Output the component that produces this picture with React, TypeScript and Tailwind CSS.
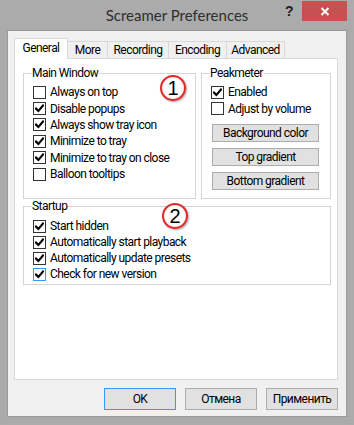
import React from 'react';

type CheckProps = { label: string; checked?: boolean; hot?: boolean; row?: string };

function Check({ label, checked, hot, row = 'h-[16px]' }: CheckProps) {
  return (
    <label className={`flex items-center ${row}`}>
      <span
        className={`flex h-[13px] w-[13px] shrink-0 items-center justify-center border bg-white ${
          hot ? 'border-[#3399ff]' : 'border-[#333333]'
        }`}
      >
        {checked && (
          <svg width="9" height="9" viewBox="0 0 9 9" fill="none">
            <path d="M1 4.6 L3.4 7 L8 1.6" stroke="#000" strokeWidth="2.2" strokeLinecap="square" />
          </svg>
        )}
      </span>
      <span className="ml-[4px] whitespace-nowrap">{label}</span>
    </label>
  );
}

function Badge({ n, pos }: { n: string; pos: string }) {
  return (
    <div
      className={`absolute flex h-[26px] w-[26px] items-center justify-center rounded-full border-2 border-[#dd2a2a] bg-[radial-gradient(circle,#ffffff_55%,#fde0e0_78%,#f4a0a0_100%)] text-[20px] leading-none tracking-normal text-black shadow-[1px_1px_2px_rgba(0,0,0,0.35)] font-['Liberation_Sans',sans-serif] ${pos}`}
    >
      {n}
    </div>
  );
}

function SmallButton({ label }: { label: string }) {
  return (
    <div className="ml-px flex h-[18px] w-[107px] items-center justify-center border border-[#adadad] bg-[#e1e1e1]">
      {label}
    </div>
  );
}

const tabs = [
  { label: 'General', w: 'w-[54px]', active: true },
  { label: 'More', w: 'w-[41px]' },
  { label: 'Recording', w: 'w-[62px]' },
  { label: 'Encoding', w: 'w-[59px]' },
  { label: 'Advanced', w: 'w-[59px]' },
];

export default function App() {
  return (
    <div className="flex h-[425px] w-[354px] flex-col bg-[#ababab] px-[7px] pb-[8px] text-[12px] leading-[14px] tracking-[-0.55px] text-black font-['Roboto','Liberation_Sans',sans-serif]">
      {/* title bar */}
      <div className="-mx-[7px] flex h-[30px] shrink-0 items-start">
        <div className="w-[78px]" />
        <div className="flex-1 text-center text-[15px] leading-[30px] tracking-normal text-[#2e2e2e] font-['Lato',sans-serif]">
          Screamer Preferences
        </div>
        <div className="flex w-[78px] pt-px">
          <div className="flex h-[20px] w-[26px] items-center justify-center text-[14px] font-bold text-[#222] font-['Liberation_Sans',sans-serif]">
            ?
          </div>
          <div className="flex h-[20px] w-[45px] items-center justify-center bg-[#c75050]">
            <svg width="10" height="9" viewBox="0 0 10 9">
              <path d="M1.5 1 L8.5 8 M8.5 1 L1.5 8" stroke="#fff" strokeWidth="2" />
            </svg>
          </div>
        </div>
      </div>

      {/* dialog body */}
      <div className="flex flex-1 flex-col border border-[#999999] bg-[#f0f0f0] pl-[6px] pr-[8px] pt-[7px] pb-[6px]">
        <div className="flex items-end">
          {tabs.map((t, i) =>
            t.active ? (
              <div
                key={t.label}
                className={`relative z-10 -mb-px flex h-[21px] items-center justify-center border border-b-0 border-[#d9d9d9] bg-white pb-[2px] ${t.w}`}
              >
                {t.label}
              </div>
            ) : (
              <div
                key={t.label}
                className={`flex h-[17px] items-center justify-center border border-b-0 border-[#d9d9d9] bg-[#f0f0f0] ${i > 0 ? '-ml-px' : ''} ${t.w}`}
              >
                {t.label}
              </div>
            )
          )}
        </div>

        <div className="h-[322px] border border-[#d9d9d9] bg-white pl-[8px] pr-[6px] pt-[7px]">
          <div className="flex gap-[5px]">
            <fieldset className="h-[133px] w-[173px] border border-[#d5d5d5]">
              <legend className="ml-[7px] px-[1px] leading-[14px]">Main Window</legend>
              <div className="relative pl-[9px] pt-[4px]">
                <Badge n="1" pos="left-[136px] -top-[5px]" />
                <Check label="Always on top" row="h-[16.4px]" />
                <Check label="Disable popups" checked row="h-[16.4px]" />
                <Check label="Always show tray icon" checked row="h-[16.4px]" />
                <Check label="Minimize to tray" checked row="h-[16.4px]" />
                <Check label="Minimize to tray on close" checked row="h-[16.4px]" />
                <Check label="Balloon tooltips" row="h-[16.4px]" />
              </div>
            </fieldset>

            <fieldset className="h-[133px] w-[130px] border border-[#d5d5d5]">
              <legend className="ml-[7px] px-[1px] leading-[14px]">Peakmeter</legend>
              <div className="pl-[9px] pt-[4px]">
                <Check label="Enabled" checked row="h-[16.4px]" />
                <Check label="Adjust by volume" row="h-[16.4px]" />
                <div className="mt-[7px] flex flex-col gap-[6px]">
                  <SmallButton label="Background color" />
                  <SmallButton label="Top gradient" />
                  <SmallButton label="Bottom gradient" />
                </div>
              </div>
            </fieldset>
          </div>

          <fieldset className="h-[86px] w-[308px] border border-[#d5d5d5]">
            <legend className="ml-[7px] px-[1px] leading-[14px]">Startup</legend>
            <div className="relative pl-[9px] pt-[5px]">
              <Badge n="2" pos="left-[138px] -top-[10px]" />
              <Check label="Start hidden" checked />
              <Check label="Automatically start playback" checked />
              <Check label="Automatically update presets" checked />
              <Check label="Check for new version" checked hot />
            </div>
          </fieldset>
        </div>

        <div className="mt-[8px] flex justify-end gap-[9px]">
          <div className="flex h-[22px] w-[72px] items-center justify-center border border-[#3399ff] bg-[#e1e1e1]">OK</div>
          <div className="flex h-[22px] w-[72px] items-center justify-center border border-[#adadad] bg-[#e1e1e1]">Отмена</div>
          <div className="flex h-[22px] w-[72px] items-center justify-center border border-[#adadad] bg-[#e1e1e1]">Применить</div>
        </div>
      </div>
    </div>
  );
}
